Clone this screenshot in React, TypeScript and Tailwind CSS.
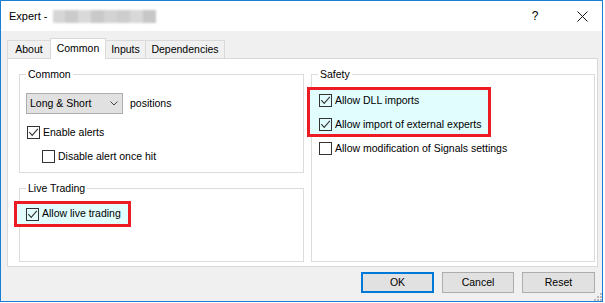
import React from 'react';

const UI = "font-['Liberation_Sans',Arial,sans-serif] text-[10.5px] text-black";

function Check({ checked, white }: { checked: boolean; white?: boolean }) {
  return (
    <span className={`w-[13px] h-[13px] border border-[#333333] flex items-center justify-center shrink-0 ${white ? 'bg-white' : ''}`}>
      {checked && (
        <svg width="11" height="11" viewBox="0 0 11 11">
          <path d="M1.3 5.2 L4.2 8.4 L9.8 1.8" fill="none" stroke="#333333" strokeWidth="1.1" />
        </svg>
      )}
    </span>
  );
}

function CheckRow({ checked, label, white, h = 'h-[17px]' }: {
  checked: boolean; label: string; white?: boolean; h?: string;
}) {
  return (
    <div className={`${h} flex items-center gap-[3px] whitespace-nowrap`}>
      <Check checked={checked} white={white} />
      <span>{label}</span>
    </div>
  );
}

function Tab({ label, active, w }: { label: string; active?: boolean; w: string }) {
  if (active) {
    return (
      <div className={`relative z-10 h-[21px] ${w} -mb-px -ml-px bg-white border border-b-0 border-[#d9d9d9] flex items-center justify-center`}>
        {label}
      </div>
    );
  }
  return (
    <div className={`h-[18px] ${w} -ml-px border border-b-0 border-[#d9d9d9] bg-[#f0f0f0] flex items-center justify-center first:ml-0`}>
      {label}
    </div>
  );
}

function Legend({ children }: { children: React.ReactNode }) {
  return <legend className="ml-[6px] px-[2px] leading-[13px]">{children}</legend>;
}

export default function App() {
  return (
    <div className={`w-[605px] h-[303px] bg-white ${UI}`}>
      <div className="relative w-[603px] h-[302px] border border-[#1a7fd4] bg-[#f0f0f0] flex flex-col overflow-hidden">
        {/* title bar */}
        <div className="h-[30px] shrink-0 bg-white flex items-center pl-[8px]">
          <span className="text-[11px]">Expert -</span>
          <div className="ml-[5px] w-[103px] h-[13px] flex blur-[1px]">
            <div className="flex-1 bg-[#d6d6d6]" />
            <div className="flex-1 bg-[#cbcbcb]" />
            <div className="flex-1 bg-[#d9d9d9]" />
            <div className="flex-1 bg-[#c9c9c9]" />
            <div className="flex-1 bg-[#d3d3d3]" />
            <div className="flex-1 bg-[#cdcdcd]" />
            <div className="flex-1 bg-[#d8d8d8]" />
            <div className="flex-1 bg-[#c7c7c7]" />
          </div>
          <div className="ml-auto flex items-center h-full">
            <span className="w-[46px] text-center text-[12px]">?</span>
            <span className="w-[44px] pl-[4px] flex justify-center">
              <svg width="11" height="11" viewBox="0 0 11 11">
                <path d="M0.5 0.5 L10.5 10.5 M10.5 0.5 L0.5 10.5" stroke="#111" strokeWidth="1" />
              </svg>
            </span>
          </div>
        </div>

        <div className="flex-1 flex flex-col pl-[6px] pr-[4px]">
          {/* tabs */}
          <div className="mt-[7px] h-[20px] flex items-end">
            <Tab label="About" w="w-[44px]" />
            <Tab label="Common" w="w-[56px]" active />
            <Tab label="Inputs" w="w-[41px]" />
            <Tab label="Dependencies" w="w-[80px]" />
          </div>

          {/* tab panel */}
          <div className="h-[209px] bg-white border border-[#d9d9d9] pt-[9px] pl-[11px] pr-[2px] pb-[4px] flex gap-[7px]">
            <div className="w-[285px] flex flex-col gap-[9px]">
              <fieldset className="h-[105px] border border-[#dcdcdc]">
                <Legend>Common</Legend>
                <div className="pl-[6px] pt-[12px]">
                  <div className="flex items-center gap-[7px]">
                    <div className="w-[97px] h-[21px] bg-[#e1e1e1] border border-[#adadad] flex items-center pl-[3px] pr-[4px]">
                      <span>Long &amp; Short</span>
                      <svg className="ml-auto" width="8" height="5" viewBox="0 0 8 5">
                        <path d="M0.5 0.5 L4 4 L7.5 0.5" fill="none" stroke="#444" strokeWidth="1" />
                      </svg>
                    </div>
                    <span>positions</span>
                  </div>
                  <div className="ml-[1px] mt-[10px]">
                    <CheckRow checked label="Enable alerts" white />
                  </div>
                  <div className="ml-[16px] mt-[7px]">
                    <CheckRow checked={false} label="Disable alert once hit" white />
                  </div>
                </div>
              </fieldset>

              <fieldset className="flex-1 border border-[#dcdcdc]">
                <Legend>Live Trading</Legend>
                <div className="-ml-[6px] mt-[6px] w-fit border-[3px] border-[#ed1c24] bg-[#e1fdfd] pl-[9px] pr-[7px]">
                  <CheckRow checked label="Allow live trading" h="h-[20px]" />
                </div>
              </fieldset>
            </div>

            <fieldset className="w-[284px] border border-[#dcdcdc]">
              <Legend>Safety</Legend>
              <div className="-ml-[5px] mt-[6px] w-fit border-[3px] border-[#ed1c24] bg-[#e1fdfd] pl-[9px] pr-[7px] pt-[2px] pb-[1px] flex flex-col gap-[7px]">
                <CheckRow checked label="Allow DLL imports" />
                <CheckRow checked label="Allow import of external experts" />
              </div>
              <div className="pl-[7px] mt-[3px]">
                <CheckRow checked={false} label="Allow modification of Signals settings" white />
              </div>
            </fieldset>
          </div>

          {/* buttons */}
          <div className="mt-[5px] pr-[3px] flex justify-end gap-[8px]">
            <button className="w-[73px] h-[21px] bg-[#e1e1e1] border-2 border-[#0078d7]">OK</button>
            <button className="w-[72px] h-[21px] bg-[#e1e1e1] border border-[#adadad]">Cancel</button>
            <button className="w-[73px] h-[21px] bg-[#e1e1e1] border border-[#adadad]">Reset</button>
          </div>
        </div>

        {/* size grip */}
        <svg className="absolute right-0 bottom-0" width="9" height="9" viewBox="0 0 9 9">
          <rect x="7" y="1" width="2" height="2" fill="#b9b9b9" />
          <rect x="4" y="4" width="2" height="2" fill="#b9b9b9" />
          <rect x="7" y="4" width="2" height="2" fill="#b9b9b9" />
          <rect x="1" y="7" width="2" height="2" fill="#b9b9b9" />
          <rect x="4" y="7" width="2" height="2" fill="#b9b9b9" />
          <rect x="7" y="7" width="2" height="2" fill="#b9b9b9" />
        </svg>
      </div>
    </div>
  );
}
